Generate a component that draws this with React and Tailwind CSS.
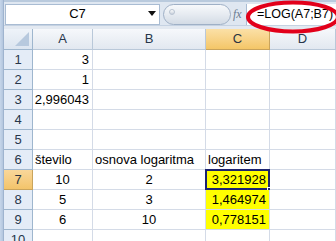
import React from "react";

const cols = ["A", "B", "C", "D"];
const rows = [
  [{ t: "3", a: "r" }, {}, {}, {}],
  [{ t: "1", a: "r" }, {}, {}, {}],
  [{ t: "2,996043", a: "r" }, {}, {}, {}],
  [{}, {}, {}, {}],
  [{}, {}, {}, {}],
  [{ t: "število", a: "l" }, { t: "osnova logaritma", a: "l" }, { t: "logaritem", a: "l" }, {}],
  [{ t: "10", a: "c" }, { t: "2", a: "c" }, { t: "3,321928", a: "r", y: true, sel: true }, {}],
  [{ t: "5", a: "c" }, { t: "3", a: "c" }, { t: "1,464974", a: "r", y: true }, {}],
  [{ t: "6", a: "c" }, { t: "10", a: "c" }, { t: "0,778151", a: "r", y: true }, {}],
  [{}, {}, {}, {}],
];

function Cell({ c }) {
  const align =
    c.a === "r" ? "justify-end pr-[3px]" : c.a === "c" ? "justify-center" : "justify-start pl-[2px]";
  return (
    <div
      className={
        "relative flex items-end pb-[1px] border-r border-b border-[#d4dbe7] text-[13px] leading-[17px] text-black whitespace-nowrap " +
        align +
        (c.y ? " bg-[#ffff00]" : " bg-white")
      }
    >
      {c.t}
      {c.sel && (
        <>
          <div className="absolute left-[-1px] top-[-1px] right-[-1px] bottom-[-1px] border-[2px] border-[#1c2470]" />
          <div className="absolute right-[-3px] bottom-[-3px] w-[5px] h-[5px] bg-[#1c2470] border border-white" />
        </>
      )}
    </div>
  );
}

export default function App() {
  return (
    <div
      className="relative w-[336px] h-[241px] overflow-hidden bg-white flex"
      style={{ fontFamily: '"Liberation Sans", Arial, sans-serif' }}
    >
      <div className="w-[4px] shrink-0 bg-gradient-to-r from-[#c6d6ea] to-[#b3c6de] border-r border-[#9fb4cf]" />
      <div className="flex flex-col flex-1">
        {/* formula bar */}
        <div className="h-[29px] shrink-0 bg-[#dfe7f1] border-t-[2px] border-[#b9cadd] flex flex-col">
          <div className="flex items-center h-[23px] pt-[1px]">
            <div className="ml-[1px] w-[155px] h-[21px] bg-white border border-[#a9bcd3] flex items-center relative">
              <span className="flex-1 text-center text-[13px] text-black pr-[10px]">C7</span>
              <span className="absolute right-[3px] top-[6px] w-0 h-0 border-l-[4px] border-r-[4px] border-t-[5px] border-l-transparent border-r-transparent border-t-[#111]" />
            </div>
            <div className="ml-[3px] w-[68px] h-[21px] rounded-full border border-[#9fb0c6] bg-gradient-to-b from-[#f7f9fb] via-[#e6ebf1] to-[#d3dbe5] relative">
              <div className="absolute left-[5px] top-[4px] w-[6px] h-[6px] rounded-full bg-gradient-to-b from-[#fdfdfd] to-[#c9d1dc] border border-[#b8c3d1]" />
            </div>
            <span
              className="ml-[2px] w-[12px] text-[12px] italic text-[#6b7b90]"
              style={{ fontFamily: '"Liberation Serif", serif' }}
            >
              fx
            </span>
            <div className="ml-[1px] flex-1 h-[21px] bg-white border-l border-[#a9bcd3] flex items-center pl-[10px] text-[12.5px] text-black whitespace-nowrap">
              =LOG(A7;B7)
            </div>
          </div>
          <div className="flex-1 border-t border-[#c5d2e2] bg-[#e3e9f1]" />
        </div>
        {/* grid */}
        <div className="grid grid-cols-[29px_60px_113px_64px_66px] grid-rows-[21px_repeat(10,20px)]">
          <div className="relative border-r border-b border-[#9eb6ce] bg-gradient-to-b from-[#eef3f9] to-[#dce5f0]">
            <svg className="absolute right-[3px] bottom-[3px]" width="14" height="14">
              <polygon points="14,0 14,14 0,14" fill="#b7c9de" />
            </svg>
          </div>
          {cols.map((c) => (
            <div
              key={c}
              className={
                "flex items-center justify-center text-[13px] border-r border-b " +
                (c === "C"
                  ? "bg-gradient-to-b from-[#fbe0a6] to-[#f4c667] border-[#c9a45c] text-[#2b3440]"
                  : "bg-gradient-to-b from-[#f6f8fb] to-[#e2e8f0] border-[#b9c8d9] text-[#27364a]")
              }
            >
              {c}
            </div>
          ))}
          {rows.map((r, i) => (
            <React.Fragment key={i}>
              <div
                className={
                  "flex items-center justify-center text-[13px] border-r border-b " +
                  (i === 6
                    ? "bg-gradient-to-b from-[#f9d79a] to-[#f3c46a] border-[#c9a45c] text-[#2b3440]"
                    : "bg-[#e4ecf7] border-[#9eb6ce] text-[#27364a]")
                }
              >
                {i + 1}
              </div>
              {r.map((c, j) => (
                <Cell key={j} c={c} />
              ))}
            </React.Fragment>
          ))}
        </div>
      </div>
      <svg className="absolute left-0 top-0 pointer-events-none" width="336" height="241">
        <ellipse cx="293" cy="17" rx="45" ry="14.5" fill="none" stroke="#e2001a" strokeWidth="4" />
      </svg>
    </div>
  );
}
